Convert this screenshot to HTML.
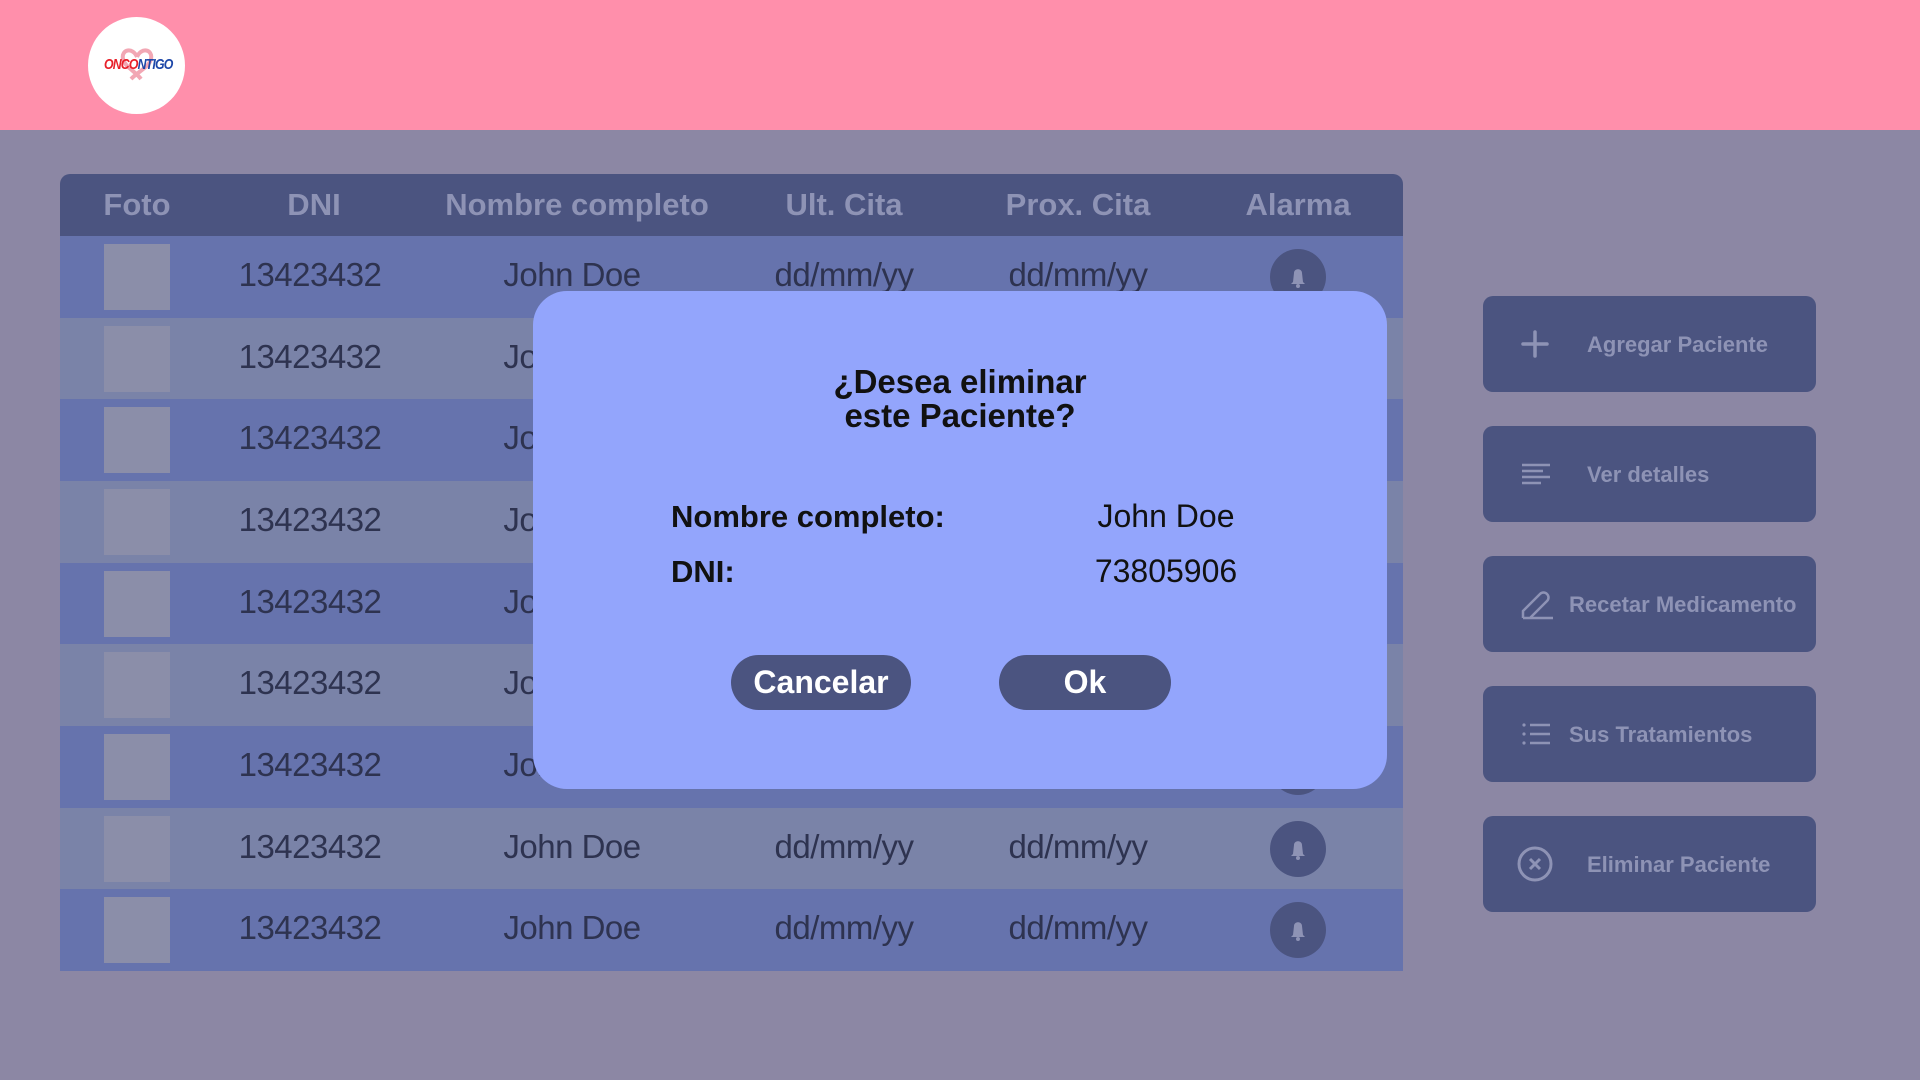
<!DOCTYPE html>
<html><head><meta charset="utf-8"><style>
*{margin:0;padding:0;box-sizing:border-box}
body{width:1920px;height:1080px;background:#8c87a4;position:relative;overflow:hidden;font-family:"Liberation Sans",sans-serif}
.top{position:absolute;left:0;top:0;width:1920px;height:130px;background:#ff8fab}
.logo{position:absolute;left:88px;top:17px;width:97px;height:97px;border-radius:50%;background:#fff}
.logo .t{position:absolute;left:16px;top:39px;font:italic bold 15px "Liberation Sans",sans-serif;letter-spacing:-1px;transform:scaleX(.82);transform-origin:left}
.tbl{position:absolute;left:60px;top:174px;width:1343px;height:797px;border-radius:10px 10px 0 0;overflow:hidden}
.hd{height:62px;background:#4b5480;position:relative}
.hd span,.row span{position:absolute;transform:translateX(-50%);white-space:nowrap}
.hd span{top:13px;font-size:31px;font-weight:bold;color:#8e93b5}
.row{height:81.67px;position:relative}
.row:nth-child(odd){background:#6673ad}
.row:nth-child(even){background:#7a83a8}
.row .ph{position:absolute;left:44px;top:8px;width:66px;height:66px;background:#8b8ea9}
.row span{top:20px;font-size:33px;color:#2e3350;letter-spacing:-.5px}
.bell{position:absolute;left:1210px;top:13px;width:56px;height:56px;border-radius:50%;background:#4b5480}
.btn{position:absolute;left:1483px;width:333px;height:96px;border-radius:10px;background:#4b5480;color:#8e93b5;font-weight:bold;font-size:22px}
.btn span{position:absolute;top:36px}
.btn svg{position:absolute;left:36px;top:32px}
.modal{position:absolute;left:533px;top:291px;width:854px;height:498px;border-radius:34px;background:#93a5fc}
.title{position:absolute;left:0;width:854px;top:74px;text-align:center;font-size:33px;font-weight:bold;line-height:34px;color:#111}
.lab{position:absolute;left:138px;font-size:31px;font-weight:bold;color:#111}
.val{position:absolute;font-size:32px;color:#111;transform:translateX(-50%)}
.mb{position:absolute;top:364px;height:55px;border-radius:28px;background:#4b5480;color:#fff;font-weight:bold;font-size:32px;text-align:center;line-height:55px}
</style></head><body>
<div class="top"></div>
<div class="logo"><svg style="position:absolute;left:27px;top:26px" width="44" height="44" viewBox="0 0 44 44"><path d="M22 14 C18 4 6 6 8 16 C10 24 20 28 26 36 M22 14 C26 4 38 6 36 16 C34 24 24 28 16 36" stroke="#f2a7b4" stroke-width="4" fill="none"/></svg><div class="t"><span style="color:#e8202a">ONCO</span><span style="color:#1d47a8">NTIGO</span></div></div>
<div class="tbl">
<div class="hd"><span style="left:77px">Foto</span><span style="left:254px">DNI</span><span style="left:517px">Nombre completo</span><span style="left:784px">Ult. Cita</span><span style="left:1018px">Prox. Cita</span><span style="left:1238px">Alarma</span></div>
<div style="position:relative">
</div>
</div>
<script>
var c=document.querySelector('.tbl > div:last-child'),h='';
for(var i=0;i<9;i++){h+='<div class="row"><div class="ph"></div><span style="left:250px">13423432</span><span style="left:512px">John Doe</span><span style="left:784px">dd/mm/yy</span><span style="left:1018px">dd/mm/yy</span><div class="bell"><svg width="56" height="56" viewBox="0 0 56 56"><path d="M23 33 L24 24 C24 19 32 19 32 24 L33 33 L35 35 L21 35 Z" fill="#8e93b5"/><circle cx="28" cy="37" r="2" fill="#8e93b5"/></svg></div></div>';}
c.innerHTML=h;
</script>
<div class="btn" style="top:296px"><svg width="32" height="32" viewBox="0 0 32 32"><path d="M16 4V28M4 16H28" stroke="#8e93b5" stroke-width="3.5" stroke-linecap="round"/></svg><span style="left:104px">Agregar Paciente</span></div>
<div class="btn" style="top:426px"><svg width="32" height="32" viewBox="0 0 32 32"><path d="M3 7H31M3 13H24M3 19H31M3 25H22" stroke="#8e93b5" stroke-width="2.5"/></svg><span style="left:104px">Ver detalles</span></div>
<div class="btn" style="top:556px"><svg width="34" height="34" viewBox="0 0 34 34"><path d="M4 30V23L21 6C23 4 26 4 28 6C30 8 30 11 28 13L11 30H4M4 30H34" stroke="#8e93b5" stroke-width="2.5" fill="none"/></svg><span style="left:86px">Recetar Medicamento</span></div>
<div class="btn" style="top:686px"><svg width="32" height="32" viewBox="0 0 32 32"><circle cx="5" cy="7" r="1.6" fill="#8e93b5"/><circle cx="5" cy="16" r="1.6" fill="#8e93b5"/><circle cx="5" cy="25" r="1.6" fill="#8e93b5"/><path d="M11 7H31M11 16H31M11 25H31" stroke="#8e93b5" stroke-width="2.5"/></svg><span style="left:86px">Sus Tratamientos</span></div>
<div class="btn" style="top:816px"><svg width="38" height="38" viewBox="0 0 38 38" style="top:29px;left:33px"><circle cx="19" cy="19" r="16" stroke="#8e93b5" stroke-width="3" fill="none"/><path d="M14 14L24 24M24 14L14 24" stroke="#8e93b5" stroke-width="3"/></svg><span style="left:104px">Eliminar Paciente</span></div>
<div class="modal">
<div class="title">¿Desea eliminar<br>este Paciente?</div>
<div class="lab" style="top:208px">Nombre completo:</div>
<div class="lab" style="top:263px">DNI:</div>
<div class="val" style="left:633px;top:207px">John Doe</div>
<div class="val" style="left:633px;top:262px">73805906</div>
<div class="mb" style="left:198px;width:180px">Cancelar</div>
<div class="mb" style="left:466px;width:172px">Ok</div>
</div>
</body></html>
